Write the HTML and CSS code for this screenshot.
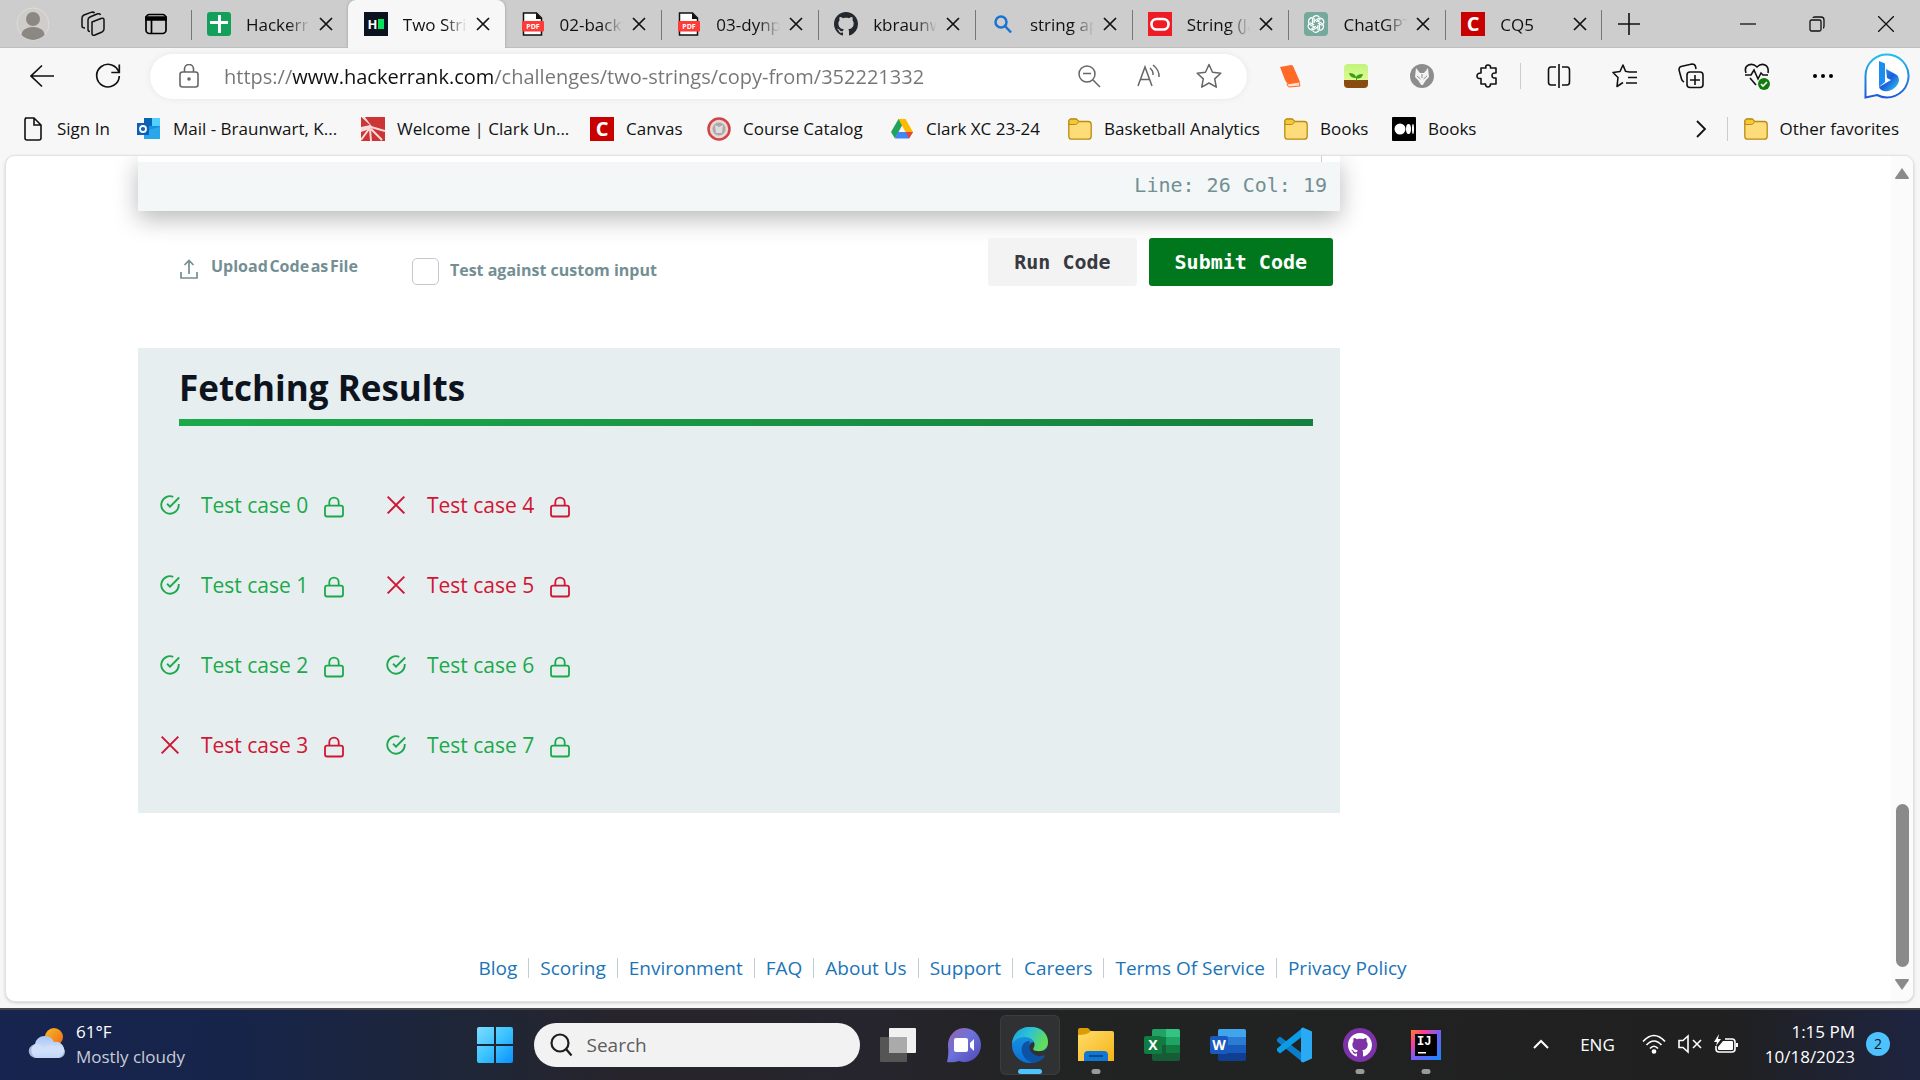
FILE: index.html
```html
<!DOCTYPE html>
<html lang="en">
<head>
<meta charset="utf-8">
<title>Two Strings | HackerRank</title>
<link rel="stylesheet" href="styles.css">
</head>
<body>
<svg class="sprite" aria-hidden="true">
  <defs>
    <linearGradient id="gWin" x1="0" y1="0" x2="1" y2="1"><stop offset="0" stop-color="#7fdcff"/><stop offset=".5" stop-color="#3cc3ff"/><stop offset="1" stop-color="#0a90ff"/></linearGradient>
    <linearGradient id="gSun" x1="0" y1="0" x2="1" y2="1"><stop offset="0" stop-color="#fbb92a"/><stop offset="1" stop-color="#ee6a12"/></linearGradient>
    <linearGradient id="gCloud" x1="0" y1="0" x2="0" y2="1"><stop offset="0" stop-color="#a9c3f5"/><stop offset=".7" stop-color="#d6e4fa"/><stop offset="1" stop-color="#8fb2f0"/></linearGradient>
    <linearGradient id="gChat" x1="0" y1="0" x2="1" y2="1"><stop offset="0" stop-color="#9a62a8"/><stop offset=".45" stop-color="#6d72dc"/><stop offset="1" stop-color="#4f46b5"/></linearGradient>
    <linearGradient id="gEdgeTop" x1="0" y1="0" x2="1" y2=".4"><stop offset="0" stop-color="#1b9de2"/><stop offset=".5" stop-color="#2cc3d6"/><stop offset="1" stop-color="#62dd55"/></linearGradient>
    <linearGradient id="gEdgeLow" x1="0" y1="0" x2="0" y2="1"><stop offset="0" stop-color="#1b9de2"/><stop offset="1" stop-color="#0b6fd6"/></linearGradient>
    <linearGradient id="gFold" x1="0" y1="0" x2="1" y2="1"><stop offset="0" stop-color="#ffdc6b"/><stop offset="1" stop-color="#f5b416"/></linearGradient>
    <linearGradient id="gBing" x1="0" y1="0" x2="1" y2="1"><stop offset="0" stop-color="#1f9bf0"/><stop offset=".5" stop-color="#1a5fe0"/><stop offset="1" stop-color="#35d5e8"/></linearGradient>
    <linearGradient id="gRing" x1="0" y1="0" x2="0" y2="1"><stop offset="0" stop-color="#22c0f0"/><stop offset="1" stop-color="#1f58d8"/></linearGradient>
    <linearGradient id="gIj" x1="0" y1="0" x2="1" y2="1"><stop offset="0" stop-color="#fc801d"/><stop offset=".25" stop-color="#fe3d9a"/><stop offset=".5" stop-color="#7a5cf5"/><stop offset="1" stop-color="#108cff"/></linearGradient>
    <linearGradient id="gPlant" x1="0" y1="0" x2="0" y2="1"><stop offset="0" stop-color="#c0f57c"/><stop offset="1" stop-color="#f0fba0"/></linearGradient>
  </defs>
  <symbol id="x" viewBox="0 0 24 24"><path d="M6 6l12 12M18 6L6 18" fill="none" stroke="currentColor" stroke-width="1.700"/></symbol>
  <symbol id="sheet" viewBox="0 0 24 24"><path d="M2.500 1h13l5 5v17h-18z" fill="#fff" stroke="#111" stroke-width="1.500"/><path d="M15 1l6 6h-6z" fill="#111"/><rect x="1" y="9" width="22" height="10.500" rx="1" fill="#ff3b38"/></symbol>
  <symbol id="git" viewBox="0 0 16 16"><path fill="currentColor" d="M8 0C3.580 0 0 3.580 0 8c0 3.540 2.290 6.530 5.470 7.590.4.070.55-.17.55-.38 0-.19-.01-.82-.01-1.490-2.010.37-2.530-.49-2.690-.94-.09-.23-.48-.94-.82-1.130-.28-.15-.68-.52-.01-.53.63-.01 1.080.58 1.230.82.72 1.210 1.870.87 2.330.66.070-.52.28-.87.51-1.070-1.780-.2-3.640-.89-3.640-3.950 0-.87.31-1.590.82-2.150-.08-.2-.36-1.020.08-2.120 0 0 .67-.21 2.200.82.64-.18 1.320-.27 2-.27.68 0 1.360.09 2 .27 1.530-1.040 2.200-.82 2.200-.82.44 1.100.16 1.920.08 2.120.51.56.82 1.270.82 2.150 0 3.070-1.870 3.750-3.650 3.950.29.25.54.73.54 1.480 0 1.070-.01 1.930-.01 2.200 0 .21.15.46.55.38A8.013 8.013 0 0 0 16 8c0-4.420-3.580-8-8-8z"/></symbol>
  <symbol id="folder" viewBox="0 0 24 24"><path d="M.8 4.500c0-1.500 1-2.500 2.400-2.500h5l2.600 2.500h9.400c1.700 0 3 1.300 3 3v11.700c0 1.700-1.300 3-3 3H3.800c-1.700 0-3-1.300-3-3z" fill="#ffdc7a" stroke="#b98b12" stroke-width="1.300"/><path d="M1 7.500h6.500c1 0 1.500-.5 3.300-3L8.200 2.200h-5C2 2.200 1 3 1 4.500z" fill="#f5c838" stroke="#b98b12"/></symbol>
  <symbol id="ok" viewBox="0 0 24 24"><path d="M22.500 10.700V12A10.500 10.500 0 1 1 15.900 2.200M23 3L12 14l-3.500-3.500" fill="none" stroke="currentColor" stroke-width="2.200"/></symbol>
  <symbol id="bad" viewBox="0 0 24 24"><path d="M2 2l20 20M22 2L2 22" fill="none" stroke="currentColor" stroke-width="2.400"/></symbol>
  <symbol id="lock" viewBox="0 0 20 22"><path d="M3 9.700h14q2 0 2 2v6.800q0 2-2 2H3q-2 0-2-2v-6.800q0-2 2-2zM5.300 9.500V6.300a4.700 4.700 0 0 1 9.400 0v3.200" fill="none" stroke="currentColor" stroke-width="1.800"/></symbol>
</svg>

<header class="tabstrip">
  <button class="cell-avatar" aria-label="Profile"><svg width="34" height="34" viewBox="0 0 34 34"><circle cx="17" cy="17" r="16" fill="#cfcdc9" stroke="#dedddb"/><circle cx="17" cy="12" r="7" fill="#8b8783"/><path d="M5.500 28a11.500 8 0 0 1 23 0 16 16 0 0 1-23 0z" fill="#8b8783"/></svg></button>
  <button class="cell-work" aria-label="Workspaces"><svg width="26" height="26" viewBox="0 0 26 26" fill="none" stroke="#111" stroke-width="1.500" stroke-linejoin="round"><path d="M12 11l9-3.500q3-1 3 1.500v9q0 2-2 3l-7 3q-3 1-3-1.500z"/><path d="M10 20.500q-2 0-2-2V9q0-2 2-3l7-3q3-1 3.500 1"/><path d="M5 17q-3 0-3-2V7q0-2 2-3l7-2.600q2.500-.8 3.500.8"/></svg></button>
  <button class="cell-actions" aria-label="Tab actions"><svg width="24" height="24" viewBox="0 0 24 24" fill="none" stroke="#000" stroke-width="1.700"><rect x="2" y="2.500" width="20" height="19" rx="3.500"/><path d="M2 5h20v3H2z" fill="#000"/><path d="M7.500 8v13"/></svg></button>
  <nav class="tabs" aria-label="Tabs">
    <div class="tab"><svg class="fav" viewBox="0 0 24 24"><rect width="24" height="24" rx="3" fill="#12a05b"/><path d="M11 3h3v18h-3zM3 9h18v3H3z" fill="#fff"/></svg><span class="label">Hackerrank</span><button class="close" aria-label="Close tab"><svg><use href="#x"/></svg></button></div>
    <div class="tab active"><svg class="fav" viewBox="0 0 24 24"><path d="M0 0h24v24H0z" fill="#0b1320"/><path d="M14 7h6v10h-6z" fill="#05e35e"/><text x="8.500" y="17" class="t-h">H</text></svg><span class="label">Two Strings</span><button class="close" aria-label="Close tab"><svg><use href="#x"/></svg></button></div>
    <div class="tab after"><svg class="fav" viewBox="0 0 24 24"><use href="#sheet"/><text x="12" y="17" class="t-pdf">PDF</text></svg><span class="label">02-backtrack</span><button class="close" aria-label="Close tab"><svg><use href="#x"/></svg></button></div>
    <div class="tab"><svg class="fav" viewBox="0 0 24 24"><use href="#sheet"/><text x="12" y="17" class="t-pdf">PDF</text></svg><span class="label">03-dynprog</span><button class="close" aria-label="Close tab"><svg><use href="#x"/></svg></button></div>
    <div class="tab dark"><svg class="fav"><use href="#git"/></svg><span class="label">kbraunwart</span><button class="close" aria-label="Close tab"><svg><use href="#x"/></svg></button></div>
    <div class="tab"><svg class="fav" viewBox="0 0 24 24"><g fill="none" stroke="#1a73d0" stroke-width="2.500"><circle cx="10" cy="10" r="5.500"/><path d="M14 14l6 6.500"/></g></svg><span class="label">string api</span><button class="close" aria-label="Close tab"><svg><use href="#x"/></svg></button></div>
    <div class="tab"><svg class="fav" viewBox="0 0 24 24"><path d="M0 0h24v24H0z" fill="#ee1c24"/><rect x="3.500" y="7" width="17" height="10.500" rx="5.200" fill="none" stroke="#fff" stroke-width="2.600"/></svg><span class="label">String (Java)</span><button class="close" aria-label="Close tab"><svg><use href="#x"/></svg></button></div>
    <div class="tab"><svg class="fav" viewBox="0 0 24 24"><rect width="24" height="24" rx="4" fill="#75a99b"/><g fill="none" stroke="#fff" stroke-width="1.200"><path id="pt" d="M8.500 12.500V7.500a3.800 3.800 0 0 1 7-2M12 9.800l4.500-2.600"/><use href="#pt" transform="rotate(60 12 12)"/><use href="#pt" transform="rotate(120 12 12)"/><use href="#pt" transform="rotate(180 12 12)"/><use href="#pt" transform="rotate(240 12 12)"/><use href="#pt" transform="rotate(300 12 12)"/></g></svg><span class="label">ChatGPT</span><button class="close" aria-label="Close tab"><svg><use href="#x"/></svg></button></div>
    <div class="tab last"><svg class="fav" viewBox="0 0 24 24"><path d="M0 0h24v24H0z" fill="#c80000"/><text x="12" y="19" class="t-c">C</text></svg><span class="label">CQ5</span><button class="close" aria-label="Close tab"><svg><use href="#x"/></svg></button></div>
  </nav>
  <button class="newtab" aria-label="New tab"><svg width="22" height="22" viewBox="0 0 22 22" stroke="#111" stroke-width="1.600"><path d="M11 0v22M0 11h22"/></svg></button>
  <div class="winctl">
    <button aria-label="Minimize"><svg width="16" height="16" viewBox="0 0 16 16" stroke="#111" stroke-width="1.300"><path d="M0 8h16"/></svg></button>
    <button aria-label="Restore"><svg width="16" height="16" viewBox="0 0 16 16" fill="none" stroke="#111" stroke-width="1.300"><rect x="1" y="4" width="11" height="11" rx="1.500"/><path d="M4 2q0-1 2-1h6q3 0 3 3v6q0 2-1 2"/></svg></button>
    <button aria-label="Close"><svg width="16" height="16" viewBox="0 0 16 16" stroke="#111" stroke-width="1.300"><path d="M0 0l16 16M16 0L0 16"/></svg></button>
  </div>
</header>

<div class="toolbar">
  <button class="nav" aria-label="Back"><svg width="24" height="24" viewBox="0 0 24 24" fill="none" stroke="#111" stroke-width="1.700"><path d="M24 12H1M12 1.500L1 12l11 10.500"/></svg></button>
  <button class="nav" aria-label="Refresh"><svg width="26" height="26" viewBox="0 0 26 26" fill="none" stroke="#111" stroke-width="1.700"><path d="M24 10A11.300 11.300 0 1 0 24.300 13M24.300 1.500v8h-8"/></svg></button>
  <div class="address">
    <svg width="20" height="24" viewBox="0 0 20 24" fill="none" stroke="#666" stroke-width="1.600"><rect x="1" y="8" width="18" height="15" rx="2.500"/><path d="M5.500 8V5a4.500 4.500 0 0 1 9 0v3"/><circle cx="10" cy="15" r="1" fill="#666"/></svg>
    <input class="url" type="text" aria-label="Address" value="https://www.hackerrank.com/challenges/two-strings/copy-from/352221332">
    <button aria-label="Zoom out"><svg width="24" height="24" viewBox="0 0 24 24" fill="none" stroke="#666" stroke-width="1.500"><circle cx="10" cy="10" r="8"/><path d="M16 16l7 7M6 9.500h8"/></svg></button>
    <button aria-label="Read aloud"><svg width="24" height="24" viewBox="0 0 24 24" fill="none" stroke="#666" stroke-width="1.500"><path d="M1 22L8 3l7 19M3.500 15.500h9M13 4q3.500 3 3 7M16 1q6.500 5 6 12"/></svg></button>
    <button aria-label="Favorite"><svg width="26" height="26" viewBox="0 0 26 26" fill="none" stroke="#666" stroke-width="1.500" stroke-linejoin="round"><path d="M13 1.500l3.500 7.700 8.300 1-6.100 5.700 1.600 8.300L13 20l-7.300 4.200 1.600-8.300-6.100-5.700 8.300-1z"/></svg></button>
  </div>
  <div class="tools">
    <button aria-label="Office"><svg width="24" height="24" viewBox="0 0 24 24"><path d="M2 3l11-2q2 0 2.500 2L22 18l-11 2q-3-1-4-4z" fill="#ff6a26"/><path d="M9 20l12-2 1 4-11 1q-2-1-2-3z" fill="#ffe0d0" stroke="#ff6a26"/></svg></button>
    <button aria-label="Plant"><svg width="24" height="24" viewBox="0 0 24 24"><rect width="24" height="24" rx="4" fill="url(#gPlant)"/><path d="M0 16h24v4q0 4-4 4H4q-4 0-4-4z" fill="#8a4b10"/><path d="M12 17v-3Q6 14 5 9q6 0 7 4 1-3 7-3-1 5-6 4.500V17z" fill="#37a012"/></svg></button>
    <button aria-label="Fox"><svg width="24" height="24" viewBox="0 0 24 24"><circle cx="12" cy="12" r="12" fill="#8d8d8d"/><path d="M6 4l4 5h4l4-5 1 9-3 3-3.200 5h-1.600L8 16l-3-3z" fill="#f4f4f4"/><path d="M7 12l3.500 3M17 12l-3.500 3M12 10v4" stroke="#8d8d8d"/></svg></button>
    <button class="sep" aria-label="Extensions"><svg width="24" height="24" viewBox="0 0 24 24" fill="none" stroke="#111" stroke-width="1.600" stroke-linejoin="round"><path d="M5 4h5q-1-3 2-3t2.500 3H20v5q-4-.5-4 2.500t4 2.500v6h-5.500q0 3-2.500 3t-2.500-3H5v-5.500q-4 .5-4-2.500t4-3z"/></svg></button>
    <button aria-label="Split screen"><svg width="24" height="24" viewBox="0 0 24 24" fill="none" stroke="#111" stroke-width="1.600"><path d="M12 0v24M9 3H4Q1.500 3 1.500 6v12q0 3 2.500 3h5M15 3h5q2.500 0 2.500 3v12q0 3-2.500 3h-5"/></svg></button>
    <button aria-label="Favorites"><svg width="26" height="24" viewBox="0 0 26 24" fill="none" stroke="#111" stroke-width="1.600" stroke-linejoin="round"><path d="M17 8l-3.500-.7L11 1 8 7.500l-7 1 5 5L5 22.500l6-4M17 8h8M16 13.500h9M14 19h11"/></svg></button>
    <button aria-label="Collections"><svg width="26" height="26" viewBox="0 0 26 26" fill="none" stroke="#111" stroke-width="1.600"><rect x="9" y="9" width="16" height="15.500" rx="3"/><path d="M17 12v10M12 17h10M6 19Q4 18 3.500 16L1 7q0-3 2-3.500L14 1q3 0 3.500 2.500L18 6"/></svg></button>
    <button aria-label="Browser essentials"><svg width="26" height="27" viewBox="0 0 26 27" fill="none" stroke="#111" stroke-width="1.600"><path d="M2 10Q0 4 4.500 2T13 4q4-4 8-2t3 8M1 12h6l3-5 4 9 3-6 2 2h5M6 15l6 7"/><circle cx="20" cy="21" r="6" fill="#107c10" stroke="none"/><path d="M17 21l2 2 4-4" stroke="#fff"/></svg></button>
    <button aria-label="More"><svg width="22" height="6" viewBox="0 0 22 6"><circle cx="3" cy="3" r="2"/><circle cx="11" cy="3" r="2"/><circle cx="19" cy="3" r="2"/></svg></button>
    <button class="bing" aria-label="Bing chat"><svg width="46" height="46" viewBox="0 0 46 46"><path d="M1.500 44.500V23A21.500 21.500 0 1 1 13 42z" fill="#fff" stroke="url(#gRing)" stroke-width="2"/><path d="M15 8l6 2.500V29l-6 5z" fill="#1c8df0"/><path d="M22 16l11 6q2 2 2 5c0 6-9 13-15 11q-4-1-5-4l12-7-4-2z" fill="url(#gBing)"/></svg></button>
  </div>
</div>

<nav class="bookmarks" aria-label="Favorites bar">
  <a href="#"><svg viewBox="0 0 24 24"><path d="M4 1h9l7 7v13q0 2-2 2H6q-2 0-2-2V3q0-2 2-2M13 1v7h7" fill="none" stroke="#111" stroke-width="1.600"/></svg>Sign In</a>
  <a href="#"><svg viewBox="0 0 24 24"><path d="M7 1h16v20H7z" fill="#1490df"/><path d="M15 1h8v8h-8z" fill="#50d0ff"/><path d="M7 1h8v8H7z" fill="#0a64b0"/><path d="M7 14l16-4v12H7z" fill="#28a8ea"/><path d="M0 6h12v12H0z" fill="#0f5fb8"/><circle cx="6" cy="12" r="3" fill="none" stroke="#fff" stroke-width="1.800"/></svg>Mail - Braunwart, K...</a>
  <a href="#"><svg viewBox="0 0 24 24"><path d="M0 0h24v24H0z" fill="#cc3535"/><path d="M0 0h4l8 11-6 2-6 2V9l8-1z" fill="#f7dada"/><path d="M0 0l9 8-9 2z" fill="#cc3535"/><path d="M10 10l14 4M10 12l11 11M9 12l1 12M8 12l-8 11" stroke="#f7d9d9" stroke-width="2" fill="none"/></svg>Welcome | Clark Un...</a>
  <a href="#"><svg viewBox="0 0 24 24"><path d="M0 0h24v24H0z" fill="#c80000"/><text x="12" y="19" class="t-c">C</text></svg>Canvas</a>
  <a href="#"><svg viewBox="0 0 24 24"><circle cx="12" cy="12" r="10.500" fill="#e9d6d6" stroke="#cf4545" stroke-width="2.500"/><circle cx="12" cy="12" r="6.500" fill="#aaa"/><path d="M8 8l4 2 4-2-1 8H9z" fill="#ddd"/></svg>Course Catalog</a>
  <a href="#"><svg viewBox="0 0 24 24"><path d="M8.500 2h7L5 21.500 1 15z" fill="#21a35a"/><path d="M8.500 2h7L23 15h-7.500z" fill="#ffba00"/><path d="M8 15h15l-4 6.500H5z" fill="#4285f4"/><path d="M16 15h7l-4 6.500z" fill="#ea4335"/></svg>Clark XC 23-24</a>
  <a href="#"><svg><use href="#folder"/></svg>Basketball Analytics</a>
  <a href="#"><svg><use href="#folder"/></svg>Books</a>
  <a href="#"><svg viewBox="0 0 24 24"><rect width="24" height="24" rx="1"/><g fill="#fff"><circle cx="8" cy="12" r="5.500"/><ellipse cx="16.500" cy="12" rx="2.500" ry="5"/><ellipse cx="21" cy="12" rx="1" ry="5"/></g></svg>Books</a>
  <button class="overflow" aria-label="More favorites"><svg width="12" height="18" viewBox="0 0 12 18" fill="none" stroke="#111" stroke-width="1.800"><path d="M2 1l8 8-8 8"/></svg></button>
  <a class="other" href="#"><svg><use href="#folder"/></svg>Other favorites</a>
</nav>

<div class="frame">
  <main class="page">
    <section class="editor"><div class="codeend"></div><div class="status">Line: 26 Col: 19</div></section>
    <div class="actions">
      <button class="upload"><svg width="18" height="20" viewBox="0 0 18 20" fill="none" stroke="currentColor" stroke-width="1.700"><path d="M1 13v6h16v-6M9 15V2M4.500 6L9 1.500 13.500 6"/></svg><span>Upload&#8202;Code&#8202;as&#8202;File</span></button>
      <label class="custom"><input type="checkbox">Test against custom input</label>
      <button class="btn run">Run Code</button>
      <button class="btn submit">Submit Code</button>
    </div>
    <section class="results">
      <h1>Fetching Results</h1>
      <ul class="cases">
        <li class="pass"><svg class="mark"><use href="#ok"/></svg>Test case 0<svg class="lock"><use href="#lock"/></svg></li>
        <li class="pass"><svg class="mark"><use href="#ok"/></svg>Test case 1<svg class="lock"><use href="#lock"/></svg></li>
        <li class="pass"><svg class="mark"><use href="#ok"/></svg>Test case 2<svg class="lock"><use href="#lock"/></svg></li>
        <li class="fail"><svg class="mark"><use href="#bad"/></svg>Test case 3<svg class="lock"><use href="#lock"/></svg></li>
        <li class="fail"><svg class="mark"><use href="#bad"/></svg>Test case 4<svg class="lock"><use href="#lock"/></svg></li>
        <li class="fail"><svg class="mark"><use href="#bad"/></svg>Test case 5<svg class="lock"><use href="#lock"/></svg></li>
        <li class="pass"><svg class="mark"><use href="#ok"/></svg>Test case 6<svg class="lock"><use href="#lock"/></svg></li>
        <li class="pass"><svg class="mark"><use href="#ok"/></svg>Test case 7<svg class="lock"><use href="#lock"/></svg></li>
      </ul>
    </section>
    <footer class="links"><a href="#">Blog</a><a href="#">Scoring</a><a href="#">Environment</a><a href="#">FAQ</a><a href="#">About Us</a><a href="#">Support</a><a href="#">Careers</a><a href="#">Terms Of Service</a><a href="#">Privacy Policy</a></footer>
  </main>
  <div class="scroll" aria-hidden="true">
    <svg width="14" height="11" viewBox="0 0 14 11" fill="#8a8a8a"><path d="M7 0l7 10q0 1-1 1H1q-1 0-1-1z"/></svg>
    <div class="thumb"></div>
    <svg width="14" height="11" viewBox="0 0 14 11" fill="#8a8a8a"><path d="M7 11L0 1q0-1 1-1h12q1 0 1 1z"/></svg>
  </div>
</div>

<footer class="taskbar">
  <div class="weather">
    <svg width="38" height="34" viewBox="0 0 38 34"><circle cx="26" cy="10" r="9" fill="url(#gSun)"/><path d="M8 31a8 8 0 0 1-1-14 10 10 0 0 1 19-2 8 8 0 0 1 4 16z" fill="url(#gCloud)"/><path d="M9 31a8 7 0 1 1 7-10q5-5 10-2 9-2 11 5 0 6-6 7z" fill="#cfdffa" opacity=".8"/></svg>
    <div><span class="temp">61°F</span><span class="sky">Mostly cloudy</span></div>
  </div>
  <div class="apps">
    <button aria-label="Start"><svg width="36" height="36" viewBox="0 0 36 36" fill="url(#gWin)"><path d="M2 0h15v17H0V2q0-2 2-2zM19 0h15q2 0 2 2v15H19zM0 19h17v17H2q-2 0-2-2zM19 19h17v15q0 2-2 2H19z"/></svg></button>
    <label class="search"><svg width="24" height="24" viewBox="0 0 24 24" fill="none" stroke="#1d1d1d" stroke-width="2.200"><circle cx="11" cy="10" r="8.500"/><path d="M17 16l5.500 6.500"/></svg><input type="text" placeholder="Search" aria-label="Search"></label>
    <button aria-label="Task view"><svg width="36" height="36" viewBox="0 0 36 36"><rect x="9" y="1" width="27" height="25" rx="1" fill="#f1f1f1"/><rect x="0" y="10" width="27" height="25" rx="1" fill="#555"/><path d="M9 10h18v16H9z" fill="#aaa"/></svg></button>
    <button aria-label="Chat"><svg width="36" height="36" viewBox="0 0 36 36"><path d="M1 35q2-7 1-16A16.500 17 0 1 1 13 34q-6 2-12 1z" fill="url(#gChat)"/><rect x="8" y="11" width="14" height="14" rx="2" fill="#fff"/><path d="M24 16l4-4v12l-4-4z" fill="#fff"/></svg></button>
    <button class="current" aria-label="Edge"><svg width="36" height="36" viewBox="0 0 36 36"><path d="M18 0a18 18 0 0 0-18 18 18 18 0 0 0 18 18q9 0 15-7-8 4-14-1c-4-4-3-8-1-11q1-2 4-2 4 8 9 9 5-2 5-8Q35 0 18 0z" fill="url(#gEdgeLow)"/><path d="M0 17C1 5 9 0 18 0c13 0 18 8 18 15 0 6-5 10-11 9-3 0-5-1-3-4 2-4-1-9-8-10Q5 9 0 17z" fill="url(#gEdgeTop)"/><path d="M18 14c-8 0-10 8-7 14q3 6 10 8 8-1 12-8-8 3-13-2c-3-3-3-8-2-12z" fill="#0d53a5"/></svg></button>
    <button class="open" aria-label="File Explorer"><svg width="36" height="36" viewBox="0 0 36 36"><path d="M0 3q0-2 2-2h8l4 4h20v8H0z" fill="#dd9c06"/><path d="M0 8q10 0 13-4h21q2 0 2 2v28H0z" fill="url(#gFold)"/><path d="M6 34v-6q0-4 4-4h16q4 0 4 4v6z" fill="#0f77d4"/><path d="M11 29h14" stroke="#0b4a8c" stroke-width="2"/></svg></button>
    <button aria-label="Excel"><svg width="36" height="36" viewBox="0 0 36 36"><rect x="8" y="2" width="28" height="32" rx="2" fill="#185c37"/><path d="M8 4q0-2 2-2h12v8H8z" fill="#21a366"/><path d="M22 2h12q2 0 2 2v6H22z" fill="#33c481"/><path d="M8 10h14v8H8z" fill="#107c41"/><path d="M22 10h14v8H22z" fill="#21a366"/><path d="M22 18h14v8H22z" fill="#107c41"/><rect y="9" width="18" height="18" rx="2" fill="#107c41"/><text x="9" y="23" class="t-off">X</text></svg></button>
    <button aria-label="Word"><svg width="36" height="36" viewBox="0 0 36 36"><rect x="8" y="2" width="28" height="32" rx="2" fill="#103f91"/><path d="M8 4q0-2 2-2h24q2 0 2 2v6H8z" fill="#41a5ee"/><path d="M8 10h28v8H8z" fill="#2b7cd3"/><path d="M8 18h28v8H8z" fill="#185abd"/><rect y="9" width="18" height="18" rx="2" fill="#185abd"/><text x="9" y="23" class="t-off">W</text></svg></button>
    <button aria-label="VS Code"><svg width="36" height="36" viewBox="0 0 36 36"><path d="M1 12l3-2.500L27 27v8.500L1 14.500z" fill="#0c7dc8"/><path d="M1 24l3 2.500L27 9V.5L1 21.500z" fill="#0c9be6"/><path d="M27 .5l9 4v27l-9 4-2-1V1.500z" fill="#2aaaf5"/></svg></button>
    <button class="open" aria-label="GitHub Desktop"><svg class="gh" width="34" height="34" viewBox="0 0 34 34"><circle cx="17" cy="17" r="17" fill="#7d32a8"/><use href="#git" x="5" y="5" width="24" height="24"/></svg></button>
    <button class="open" aria-label="IntelliJ IDEA"><svg width="30" height="30" viewBox="0 0 30 30"><path d="M0 0h30v30H0z" fill="url(#gIj)"/><path d="M4 4h22v22H4z"/><text x="6" y="15" class="t-ij">IJ</text><path d="M7 22h8v1.500H7z" fill="#fff"/></svg></button>
  </div>
  <div class="tray">
    <button aria-label="Hidden icons"><svg width="16" height="10" viewBox="0 0 16 10" fill="none" stroke="#fff" stroke-width="2"><path d="M1 9l7-7 7 7"/></svg></button>
    <span class="lang">ENG</span>
    <div class="status-icons">
      <svg width="24" height="20" viewBox="0 0 24 20" fill="none" stroke="#fff" stroke-width="1.700"><path d="M1 7.500q11-12 22 0M4.500 11q7.500-8 15 0M8 14.500q4-4.500 8 0"/><circle cx="12" cy="17.500" r="1.500" fill="#fff"/></svg>
      <svg width="24" height="20" viewBox="0 0 24 20" fill="none" stroke="#fff" stroke-width="1.600"><path d="M10 2v16l-5-4.500H1v-7h4zM15 6l8 8M23 6l-8 8"/></svg>
      <svg width="24" height="20" viewBox="0 0 24 20"><path d="M2 12v3q0 3 3 3h13q3 0 3-3V8q0-3-3-3h-7" fill="none" stroke="#fff" stroke-width="1.600"/><path d="M9 7h9q1 0 1 1v7q0 1-1 1H5q-1 0-1-1v-2zM22 9h2v4h-2zM5 0L0 8h3l-1 4 5-7H4z" fill="#fff"/></svg>
    </div>
    <div class="clock"><span>1:15 PM</span><span>10/18/2023</span></div>
    <span class="badge">2</span>
  </div>
</footer>
</body>
</html>
```
FILE: styles.css
```css
* { box-sizing: border-box; }
body {
  margin: 0;
  min-height: 100vh;
  display: flex;
  flex-direction: column;
  background: #f7f7f7;
  color: #111;
  font-family: "Open Sans", "Noto Sans", sans-serif;
  font-size: 17px;
}
button {
  border: 0;
  padding: 0;
  background: none;
  color: inherit;
  font: inherit;
  display: flex;
  align-items: center;
  justify-content: center;
}
a { color: inherit; text-decoration: none; }
svg { flex: none; }
.sprite { position: absolute; width: 0; height: 0; }

.t-pdf { font: bold 7px "Open Sans", sans-serif; fill: #fff; text-anchor: middle; }
.t-c { font: bold 20px "Open Sans", sans-serif; fill: #fff; text-anchor: middle; }
.t-h { font: bold 13px "Open Sans", sans-serif; fill: #fff; text-anchor: middle; }
.t-off { font: bold 14px "Open Sans", sans-serif; fill: #fff; text-anchor: middle; }
.t-ij { font: bold 12px "Liberation Mono", monospace; fill: #fff; }

/* Tab strip */
.tabstrip {
  display: flex;
  height: 48px;
  background: #cdcdcd;
  box-shadow: inset 0 -1px #bdbdbd;
}
.cell-avatar { width: 66px; }
.cell-work { width: 54px; }
.cell-actions { width: 71px; }
.tabs { display: flex; flex: 0 1 1411px; min-width: 0; }
.tab {
  flex: 1 1 0;
  min-width: 0;
  display: flex;
  align-items: center;
  padding: 0 10px 0 16px;
  background: linear-gradient(#777, #777) 0 10px / 1px 30px no-repeat;
}
.tab.active { background: #f7f7f7; border-radius: 8px 8px 0 0; box-shadow: 0 0 3px #999; clip-path: inset(0 -4px 0 -4px); }
.tab.after { background: none; }
.tab.last { background: linear-gradient(#777, #777) 0 10px / 1px 30px no-repeat, linear-gradient(#777, #777) 100% 10px / 1px 30px no-repeat; }
.tab.dark .fav { color: #24292f; }
.fav { width: 24px; height: 24px; margin-right: 15px; }
.label {
  flex: 1;
  overflow: hidden;
  white-space: nowrap;
  -webkit-mask-image: linear-gradient(90deg, #000 65%, transparent);
  mask-image: linear-gradient(90deg, #000 65%, transparent);
}
.close { width: 24px; margin-left: 4px; }
.close svg { width: 24px; height: 24px; }
.newtab { width: 54px; }
.winctl { margin-left: auto; display: flex; }
.winctl button { width: 69px; }

/* Toolbar */
.toolbar { display: flex; align-items: center; height: 56px; padding: 0 10px 0 9px; }
.nav { width: 66px; height: 44px; }
.address {
  flex: 1;
  display: flex;
  align-items: center;
  height: 45px;
  margin-left: 9px;
  padding: 0 8px 0 29px;
  border-radius: 23px;
  background: #fff;
  box-shadow: 0 0 6px #e6e6e6;
}
.address button { width: 60px; height: 40px; }
.url {
  flex: 1;
  min-width: 0;
  border: 0;
  padding: 0;
  margin-left: 25px;
  outline: 0;
  font: 20px "Open Sans", "Noto Sans", sans-serif;
  color: transparent;
  background: linear-gradient(90deg, #757575 68px, #111 68px, #111 269px, #757575 269px);
  -webkit-background-clip: text;
  background-clip: text;
}
.tools { display: flex; align-items: center; margin-left: 10px; }
.tools button { width: 66px; height: 40px; }
.tools .sep { margin-right: 5px; background: linear-gradient(#ccc, #ccc) 100% 50% / 1px 26px no-repeat; }
.tools .bing { width: 46px; margin-left: 8px; }

/* Favorites bar */
.bookmarks {
  display: grid;
  grid-template-columns: 116px 224px 229px 117px 183px 178px 216px 108px 84px 1fr auto;
  align-items: center;
  height: 51px;
  padding: 0 21px 2px;
  white-space: nowrap;
}
.bookmarks a { display: flex; align-items: center; gap: 12px; }
.bookmarks a svg { width: 24px; height: 24px; }
.bookmarks .overflow { justify-self: end; width: 52px; height: 30px; }
.bookmarks .other { padding-left: 16px; border-left: 1px solid #ccc; }

/* Web page */
.frame {
  flex: 1;
  display: flex;
  margin: 0 6px 6px 5px;
  overflow: hidden;
  border: 1px solid #e2e2e2;
  border-radius: 10px;
  background: #fff;
  box-shadow: 0 1px 3px #ccc;
}
.page { flex: 1; display: flex; flex-direction: column; min-width: 0; padding: 0 0 18px 132px; }
.editor, .actions, .results { width: 100%; max-width: 1202px; }
.editor { box-shadow: 0 8px 24px rgba(0, 0, 0, .28); background: #fffffe; }
.codeend { height: 6px; margin-right: 18px; border-right: 1px solid #ccc; }
.status {
  height: 49px;
  padding-right: 13px;
  background: #f3f7f7;
  color: #738f93;
  font: 20px/46px "DejaVu Sans Mono", monospace;
  text-align: right;
}
.actions {
  display: flex;
  align-items: flex-start;
  padding: 27px 7px 62px 42px;
  color: #738f93;
  font-size: 16px;
  font-weight: 700;
}
.upload { gap: 13px; margin-top: 17px; align-items: flex-start; line-height: 22px; }
.upload svg { margin-top: 4px; }
.custom { display: flex; align-items: flex-start; gap: 11px; margin: 20px auto 0 54px; line-height: 24px; }
.custom input { appearance: none; width: 27px; height: 27px; margin: 0; border: 1px solid #c2c7d0; border-radius: 5px; background: #fff; }
.btn { height: 48px; border-radius: 3px; font: 700 20px "DejaVu Sans Mono", monospace; padding: 0 26px; }
.run { background: #f3f3f3; color: #39393f; }
.submit { margin-left: 12px; background: #00771d; color: #fff; }

.results { background: #e6eeef; padding: 16px 27px 28px 22px; }
.results h1 {
  margin: 0 0 0 19px;
  padding-bottom: 7px;
  border-bottom: 7px solid;
  border-image: linear-gradient(90deg, #1ba94c, #15803d) 1;
  color: #0e141e;
  font-size: 35px;
  line-height: 48px;
}
.cases {
  display: grid;
  grid-template: repeat(4, 80px) / repeat(2, 226px);
  grid-auto-flow: column;
  margin: 0;
  padding: 39px 0 0;
  list-style: none;
  font-size: 21px;
}
.cases li { display: flex; align-items: center; }
.pass { color: #1ba94c; }
.fail { color: #d11534; }
.mark { width: 20px; height: 20px; margin-right: 21px; }
.lock { width: 20px; height: 22px; margin: 4px 0 0 16px; }

.links { display: flex; justify-content: center; margin: auto 144px 0 0; color: #1a74b8; font-size: 19px; line-height: 30px; }
.links a + a { margin-left: 11px; padding-left: 12px; background: linear-gradient(#c2d0d6, #c2d0d6) 0 50% / 1px 20px no-repeat; }

.scroll { width: 22px; display: flex; flex-direction: column; align-items: center; padding: 12px 0 11px; background: #fbfbfb; }
.thumb { width: 13px; height: 163px; margin: auto 0 12px; border-radius: 7px; background: #8a8a8a; }

/* Taskbar */
.taskbar {
  display: grid;
  grid-template-columns: 1fr auto 1fr;
  align-items: center;
  height: 72px;
  border-top: 2px solid #45454a;
  background: linear-gradient(90deg, #17244f 0, #16244a 12%, #1f2636 25%, #28242b 33%, #26252d 46%, #222323 54%, #202020 90%, #1e2440 100%);
  color: #fff;
}
.weather { display: flex; align-items: center; gap: 10px; padding: 0 0 2px 28px; line-height: 25px; }
.weather span, .clock span { display: block; }
.sky { color: #c9ccd6; }
.apps { display: flex; align-items: center; gap: 6px; }
.apps button { position: relative; width: 60px; height: 60px; border-radius: 6px; }
.apps .current { background: #2f3132; box-shadow: inset 0 0 0 1px #3a3c3d; }
.apps .current::after, .apps .open::after {
  content: "";
  position: absolute;
  bottom: 1px;
  left: 50%;
  width: 24px;
  height: 5px;
  border-radius: 3px;
  background: #4cc2ff;
  transform: translateX(-50%);
}
.apps .open::after { width: 9px; background: #9a9a9a; }
.gh { color: #fff; }
.search { display: flex; align-items: center; gap: 14px; width: 326px; height: 44px; margin: 0 2px 0 3px; padding: 0 15px; border-radius: 22px; background: #f2f2f2; }
.search input { flex: 1; min-width: 0; border: 0; padding: 0; background: none; font: 19px "Open Sans", sans-serif; }
.search input::placeholder { color: #5d5d5d; opacity: 1; }
.tray { display: flex; align-items: center; justify-content: flex-end; padding: 0 30px 2px 0; }
.lang { margin: 0 27px 0 31px; }
.status-icons { display: flex; gap: 12px; }
.clock { margin: 0 11px 0 27px; line-height: 25px; text-align: right; }
.badge { width: 24px; height: 24px; border-radius: 12px; background: #4cc2ff; color: #111; font-size: 14px; line-height: 24px; text-align: center; }
```
